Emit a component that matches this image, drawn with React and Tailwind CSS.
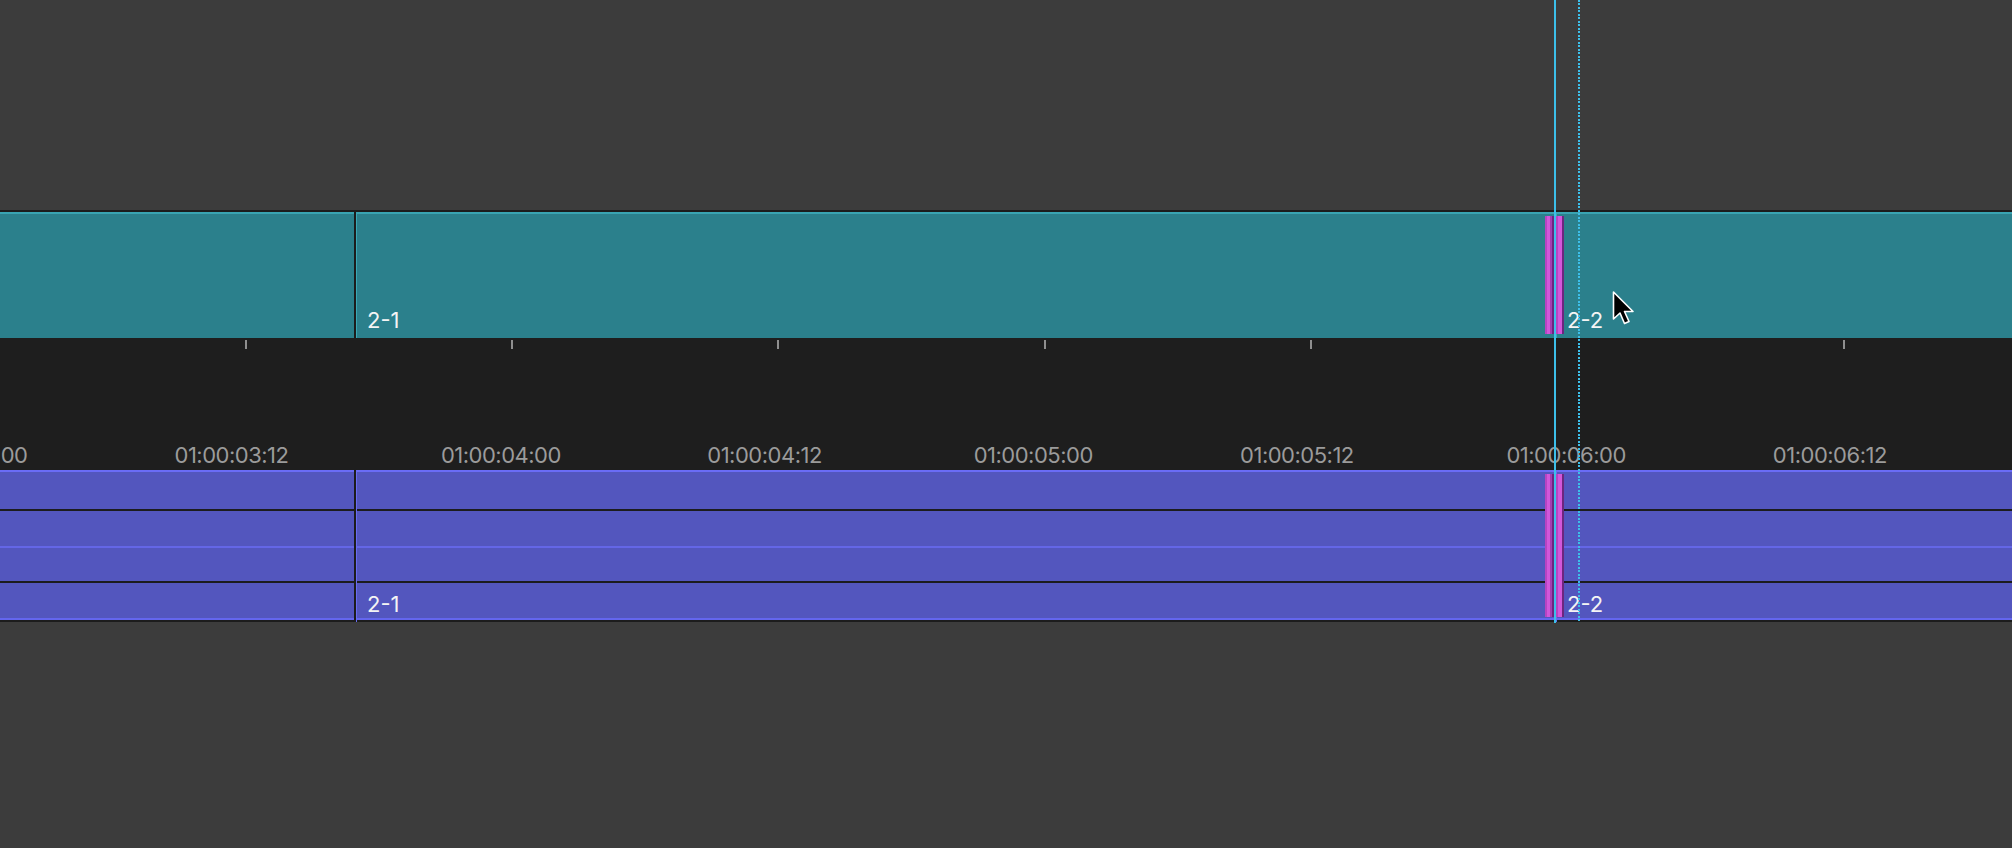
const FONT = "font-[family-name:Inter,'Noto_Sans',sans-serif]";

const labels = [
  "01:00:03:00",
  "01:00:03:12",
  "01:00:04:00",
  "01:00:04:12",
  "01:00:05:00",
  "01:00:05:12",
  "01:00:06:00",
  "01:00:06:12",
];

function TealClip({ label, className = "" }) {
  return (
    <div
      className={`bg-[#2b808c] border-t-2 border-t-[#39a4b2] border-l border-l-[#3aa8b6] flex items-end pl-[10px] pb-[7px] ${className}`}
    >
      {label && (
        <span className={`${FONT} text-[22px] leading-none text-[#f4f4f4]`}>{label}</span>
      )}
    </div>
  );
}

function PurpleClip({ label, first = false, className = "" }) {
  return (
    <div className={`flex flex-col ${first ? "" : "border-l border-l-[#6a6cf2]"} ${className}`}>
      <div className="h-[2px] bg-[#6a6cf6]" />
      <div className="h-[37px] bg-[#5356be]" />
      <div className="h-[2px] bg-[#1c1c1e]" />
      <div className="h-[35px] bg-[#5356be]" />
      <div className="h-[2px] bg-[#6466e6]" />
      <div className="h-[33px] bg-[#5356be]" />
      <div className="h-[2px] bg-[#1c1c1e]" />
      <div className="h-[35px] bg-[#5356be] flex items-end pl-[10px] pb-[3px]">
        {label && (
          <span className={`${FONT} text-[22px] leading-none text-[#f4f4f4]`}>{label}</span>
        )}
      </div>
      <div className="h-[2px] bg-[#6466ee]" />
      <div className="h-[2px] bg-[#1c1c1c]" />
    </div>
  );
}

function EditBars({ top, height }) {
  return (
    <>
      <div
        className="absolute left-[1545px] w-[9px] bg-[linear-gradient(to_right,#b744c2_0px,#b744c2_2px,#d257da_2px,#d257da_5px,#a53cb2_5px,#a53cb2_7px,#6c2680_7px,#6c2680_9px)]"
        style={{ top, height }}
      />
      <div
        className="absolute left-[1556px] w-[8px] bg-[linear-gradient(to_right,#b744c2_0px,#b744c2_2px,#d257da_2px,#d257da_6px,#6c2680_6px,#6c2680_8px)]"
        style={{ top, height }}
      />
    </>
  );
}

export default function App() {
  return (
    <div className="relative w-[2012px] h-[848px] overflow-hidden bg-[#3c3c3c] flex flex-col">
      <div className="h-[210px] shrink-0" />

      {/* video track */}
      <div className="h-[2px] shrink-0 bg-[#1c1c1c]" />
      <div className="flex h-[126px] shrink-0">
        <div className="w-[354px] shrink-0 bg-[#2b808c] border-t-2 border-t-[#39a4b2]" />
        <div className="w-[2px] shrink-0 bg-[#1c1c1c]" />
        <TealClip label="2-1" className="w-[1198px] shrink-0" />
        <div className="w-[2px] shrink-0 bg-[#1c1c1c]" />
        <TealClip label="2-2" className="flex-1" />
      </div>

      {/* ruler */}
      <div className="flex h-[132px] shrink-0 bg-[#1e1e1e] overflow-hidden">
        <div className="flex shrink-0 ml-[-91.9px]">
          {labels.map((l) => (
            <div key={l} className="w-[266.4px] shrink-0 flex flex-col">
              <div
                className={`ml-[70px] mt-[2px] w-[2px] h-[9px] ${
                  l === "01:00:06:00" ? "bg-transparent" : "bg-[#8f8f8f]"
                }`}
              />
              <div
                className={`mt-auto pb-[4px] ${FONT} text-[22px] leading-none tracking-[-0.5px] text-[#9b9b9b] whitespace-nowrap`}
              >
                {l}
              </div>
            </div>
          ))}
        </div>
      </div>

      {/* audio track */}
      <div className="flex shrink-0">
        <PurpleClip first className="w-[354px] shrink-0" />
        <div className="w-[2px] shrink-0 bg-[#1c1c1c]" />
        <PurpleClip label="2-1" className="w-[1198px] shrink-0" />
        <div className="w-[2px] shrink-0 bg-[#1c1c1c]" />
        <PurpleClip label="2-2" className="flex-1" />
      </div>

      {/* edit point bars */}
      <EditBars top={216} height={118} />
      <EditBars top={474} height={143} />

      {/* skimmer (dotted) */}
      <div className="absolute left-[1578px] top-0 w-[2px] h-[623px] bg-[repeating-linear-gradient(to_bottom,#3dbfea_0px,#3dbfea_2px,transparent_2px,transparent_3.5px)]" />

      {/* playhead */}
      <div className="absolute left-[1554px] top-0 w-[2px] h-[623px] bg-[#3cbfe9]" />

      {/* mouse cursor */}
      <svg
        className="absolute left-[1611px] top-[290px]"
        width="25"
        height="37"
        viewBox="0 0 25 37"
      >
        <path
          d="M2.5 2 L2.5 29 L9 23 L13.5 33.5 L18 31.5 L13.5 21.5 L22 21.5 Z"
          fill="#000"
          stroke="#fff"
          strokeWidth="1.6"
          strokeLinejoin="round"
        />
      </svg>
    </div>
  );
}
